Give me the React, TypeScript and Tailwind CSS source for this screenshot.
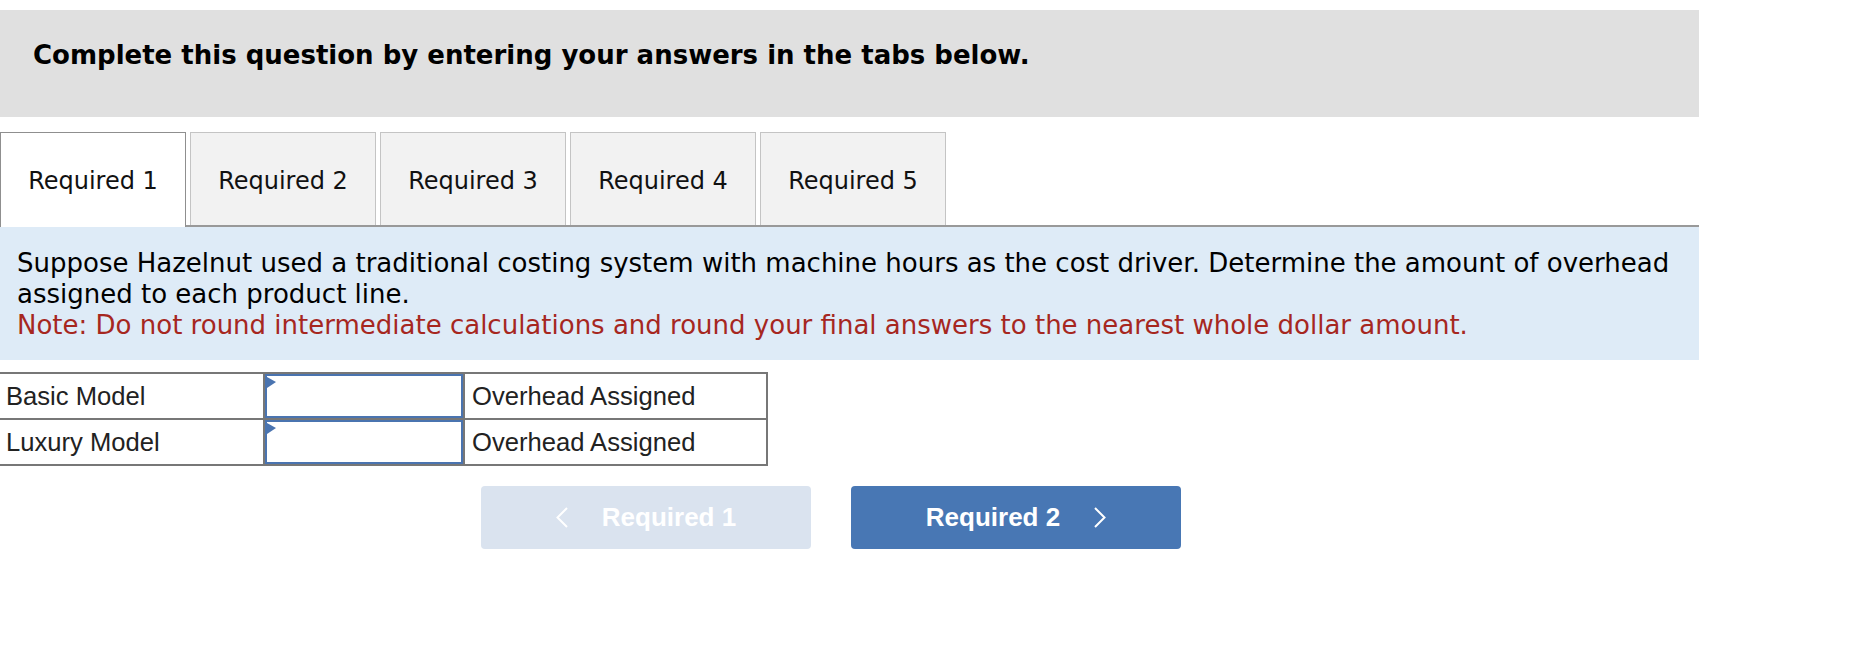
import React from "react";

const tabs = ["Required 1", "Required 2", "Required 3", "Required 4", "Required 5"];

const rows = [
  { label: "Basic Model", unit: "Overhead Assigned" },
  { label: "Luxury Model", unit: "Overhead Assigned" },
];

const AnswerCell: React.FC = () => (
  <div className="relative bg-white border-2 border-[#4a74b0]">
    <svg className="absolute left-0 top-[1px]" width="10" height="12" viewBox="0 0 10 12">
      <polygon points="0,0 9,5 0,11" fill="#4a74b0" />
    </svg>
    <input type="text" className="w-full h-full outline-none bg-transparent px-2 text-[25px]" />
  </div>
);

export default function App() {
  return (
    <div className="w-[1699px] min-h-[648px] pt-[10px] bg-white text-black">
      <div className="h-[107px] bg-[#e0e0e0] pl-[33px] pt-[30px]">
        <p className="font-['DejaVu_Sans',sans-serif] font-bold text-[26px] leading-[30px]">
          Complete this question by entering your answers in the tabs below.
        </p>
      </div>

      <div className="mt-[15px] flex items-start gap-[4px] border-b-2 border-[#999]">
        {tabs.map((t, i) => (
          <div
            key={t}
            className={
              i === 0
                ? "w-[186px] h-[95px] -mb-[2px] pb-[2px] bg-white border border-b-0 border-[#8f8f8f] pt-[4px] flex items-center justify-center"
                : "w-[186px] h-[93px] bg-[#f2f2f2] border border-b-0 border-[#c4c4c4] pt-[4px] flex items-center justify-center"
            }
          >
            <span className="font-['DejaVu_Sans',sans-serif] text-[24px] leading-[28px] text-[#111]">{t}</span>
          </div>
        ))}
      </div>

      <div className="bg-[#deebf7] pl-[17px] pr-[17px] pt-[21px] pb-[19px] font-['DejaVu_Sans',sans-serif] text-[26px] leading-[31px]">
        <p className="text-black">
          Suppose Hazelnut used a traditional costing system with machine hours as the cost driver. Determine the amount of overhead assigned to each product line.
        </p>
        <p className="text-[#a6271f]">
          Note: Do not round intermediate calculations and round your final answers to the nearest whole dollar amount.
        </p>
      </div>

      <div className="mt-[12px] inline-grid grid-cols-[263px_198px_301px] auto-rows-[44px] gap-[2px] bg-[#777] border-t-2 border-r-2 border-b-2 border-[#777] font-['Liberation_Sans',Arial,sans-serif] text-[25.6px] text-[#222]">
        {rows.map((r) => (
          <React.Fragment key={r.label}>
            <div className="bg-white flex items-center pl-[6px]">{r.label}</div>
            <AnswerCell />
            <div className="bg-white flex items-center pl-[7px]">{r.unit}</div>
          </React.Fragment>
        ))}
      </div>

      <div className="mt-[20px] ml-[481px] flex gap-[40px] font-['Liberation_Sans',Arial,sans-serif] font-bold text-[26px] text-white">
        <button
          disabled
          className="w-[330px] h-[63px] rounded-[4px] bg-[#dae3ef] flex items-center justify-center gap-[34px]"
        >
          <svg width="12" height="21" viewBox="0 0 12 21" fill="none">
            <polyline points="11,1 1.5,10.5 11,20" stroke="white" strokeWidth="2" />
          </svg>
          <span>Required 1</span>
        </button>
        <button className="w-[330px] h-[63px] rounded-[4px] bg-[#4877b4] flex items-center justify-center gap-[34px]">
          <span>Required 2</span>
          <svg width="12" height="21" viewBox="0 0 12 21" fill="none">
            <polyline points="1,1 10.5,10.5 1,20" stroke="white" strokeWidth="2" />
          </svg>
        </button>
      </div>
    </div>
  );
}
